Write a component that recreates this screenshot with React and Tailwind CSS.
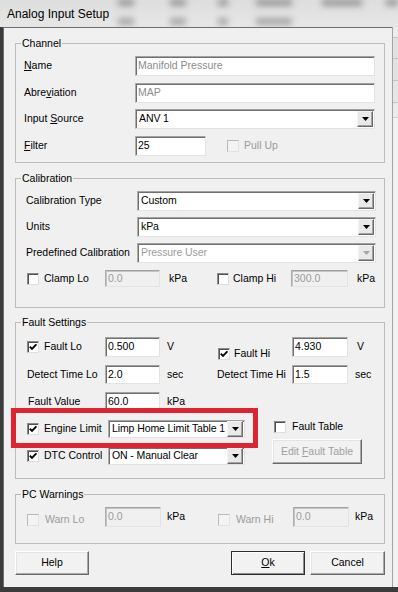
import React from "react";

const ui = "font-['Liberation_Sans',Arial,sans-serif]";

function Check({ checked = false, disabled = false, className = "" }) {
  return (
    <span
      className={`inline-flex h-[12px] w-[12px] shrink-0 items-center justify-center border ${
        disabled
          ? "border-t-[#b9b9b9] border-l-[#b9b9b9] border-r-[#e2e2e2] border-b-[#e2e2e2] bg-[#f3f3f3]"
          : "border-t-[#8a8a8a] border-l-[#8a8a8a] border-r-[#dedede] border-b-[#dedede] bg-white shadow-[inset_1px_1px_0_#505050]"
      } ${className}`}
    >
      {checked && (
        <svg width="8" height="8" viewBox="0 0 8 8">
          <path d="M0.8 3.6 3 5.9 7.4 1.3" stroke="#000" strokeWidth="1.9" fill="none" />
        </svg>
      )}
    </span>
  );
}

function Field({ value = "", disabled = false, dim = false, className = "" }) {
  return (
    <div
      className={`flex shrink-0 items-center overflow-hidden whitespace-nowrap border border-t-[#a2a2a2] border-l-[#adadad] border-r-[#e3e3e3] border-b-[#e3e3e3] pl-[2px] ${
        disabled
          ? "bg-[#f0f0f0] text-[#9b9b9b] shadow-[inset_1px_1px_0_#c4c4c4]"
          : "bg-white shadow-[inset_1px_1px_0_#707070]"
      } ${dim ? "text-[#8c8c8c]" : ""} ${className}`}
    >
      {value}
    </div>
  );
}

function Combo({ value = "", disabled = false, className = "" }) {
  return (
    <div
      className={`flex shrink-0 items-center border border-t-[#a2a2a2] border-l-[#adadad] border-r-[#e3e3e3] border-b-[#e3e3e3] bg-white shadow-[inset_1px_1px_0_#707070] ${className}`}
    >
      <span
        className={`min-w-0 flex-1 overflow-hidden whitespace-nowrap pl-[3px] tracking-[-0.1px] ${
          disabled ? "text-[#9b9b9b]" : ""
        }`}
      >
        {value}
      </span>
      <span className="mr-[1px] flex h-[16px] w-[16px] shrink-0 items-center justify-center border border-t-[#f4f4f4] border-l-[#f4f4f4] border-r-[#6a6a6a] border-b-[#6a6a6a] bg-[#e9e9e9] shadow-[inset_-1px_-1px_0_#a3a3a3]">
        <svg width="7" height="4" viewBox="0 0 7 4">
          <path d="M0 0H7L3.5 4Z" fill={disabled ? "#a5a5a5" : "#000"} />
        </svg>
      </span>
    </div>
  );
}

function Group({ title, className = "", children }) {
  return (
    <fieldset className={`w-[370px] shrink-0 border border-[#bcbcbc] ${className}`}>
      <legend className="ml-[5px] px-[1px] leading-[14px]">{title}</legend>
      {children}
    </fieldset>
  );
}

function Button({ children, primary = false, disabled = false, className = "" }) {
  return (
    <div
      className={`flex h-[24px] shrink-0 items-center justify-center border bg-[#f2f2f2] ${
        primary
          ? "border-[#2e2e2e] shadow-[inset_1px_1px_0_#fff,inset_-1px_-1px_0_#8c8c8c]"
          : "border-t-[#ffffff] border-l-[#ffffff] border-r-[#6b6b6b] border-b-[#6b6b6b] shadow-[inset_-1px_-1px_0_#a8a8a8,inset_1px_1px_0_#e4e4e4]"
      } ${disabled ? "text-[#a0a0a0]" : ""} ${className}`}
    >
      <span>{children}</span>
    </div>
  );
}

function TitleBar() {
  // blurred window content showing through the glass title bar
  const blobs = [
    ["ml-[118px]", "w-[16px]"],
    ["ml-[36px]", "w-[16px]"],
    ["ml-[32px]", "w-[10px]"],
    ["ml-[28px]", "w-[36px]"],
    ["ml-[30px]", "w-[40px]"],
    ["ml-[24px]", "w-[12px]"],
  ];
  return (
    <div className="relative h-[27px] shrink-0 overflow-hidden bg-gradient-to-b from-[#dddddd] to-[#e7e7e7]">
      <div className="absolute inset-0 blur-[3px]">
        <div className="-mt-[1px] flex h-[7px]">
          {blobs.map(([ml, w], i) => (
            <div key={i} className={`${ml} ${w} h-full bg-[#9a9a9a]`} />
          ))}
        </div>
        <div className="mt-[12px] flex h-[7px]">
          {blobs.slice(0, 4).map(([ml, w], i) => (
            <div key={i} className={`${ml} ${w} h-full bg-[#a6a6a6]`} />
          ))}
        </div>
      </div>
      <div className="relative flex h-full items-center pl-[7px] text-[12px] text-black">
        Analog Input Setup
      </div>
    </div>
  );
}

function RightStrip() {
  return (
    <div className="flex w-[6px] shrink-0 flex-col border-l border-[#a4a4a4] bg-[#ececec]">
      <div className="mt-[10px] h-[22px] border-y border-[#c4c4c4] bg-[#e2e2e2]" />
      <div className="h-[22px] border-b border-[#c4c4c4] bg-[#e2e2e2]" />
      <div className="h-[22px] border-b border-[#c4c4c4] bg-[#e6e6e6]" />
      <div className="mt-[14px] flex-1 border-t border-[#cfcfcf] bg-[#f2f2f2]" />
    </div>
  );
}

export default function App() {
  return (
    <div className={`${ui} flex h-[592px] w-[398px] flex-col overflow-hidden bg-[#3b3b3b] text-[10.5px] text-black`}>
      <TitleBar />
      <div className="flex min-h-0 flex-1">
        <div className="w-[3px] shrink-0 bg-[#3b3b3b]" />
        <div className="flex min-w-0 flex-1 flex-col border-l border-t border-[#6e6e6e] bg-[#f0f0f0] pl-[11px] pr-[7px] pt-[8px]">
          {/* Channel */}
          <Group title="Channel" className="h-[127px]">
            <div className="flex flex-col pl-[8px] pr-[9px]">
              <div className="mt-[6px] flex h-[20px] items-center">
                <span className="w-[111px] shrink-0"><u>N</u>ame</span>
                <Field value="Manifold Pressure" dim className="h-full flex-1" />
              </div>
              <div className="mt-[7px] flex h-[20px] items-center">
                <span className="w-[111px] shrink-0">Abre<u>v</u>iation</span>
                <Field value="MAP" dim className="h-full flex-1" />
              </div>
              <div className="mt-[6px] flex h-[20px] items-center">
                <span className="w-[111px] shrink-0">Input <u>S</u>ource</span>
                <Combo value="ANV 1" className="h-full flex-1" />
              </div>
              <div className="mt-[7px] flex h-[20px] items-center">
                <span className="w-[111px] shrink-0"><u>F</u>ilter</span>
                <Field value="25" className="h-full w-[71px]" />
                <Check disabled className="ml-[21px]" />
                <span className="ml-[5px] text-[#9b9b9b]">Pull Up</span>
              </div>
            </div>
          </Group>

          {/* Calibration */}
          <Group title="Calibration" className="mt-[8px] h-[137px]">
            <div className="flex flex-col pl-[10px] pr-[8px]">
              <div className="mt-[6px] flex h-[20px] items-center">
                <span className="w-[111px] shrink-0">Calibration Type</span>
                <Combo value="Custom" className="h-full flex-1" />
              </div>
              <div className="mt-[6px] flex h-[20px] items-center">
                <span className="w-[111px] shrink-0">Units</span>
                <Combo value="kPa" className="h-full flex-1" />
              </div>
              <div className="mt-[6px] flex h-[20px] items-center">
                <span className="w-[111px] shrink-0 whitespace-nowrap">Predefined Calibration</span>
                <Combo value="Pressure User" disabled className="h-full flex-1" />
              </div>
              <div className="-ml-[10px] mt-[7px] flex h-[17px] items-center pl-[11px]">
                <Check />
                <span className="ml-[5px] w-[61px] shrink-0">Clamp Lo</span>
                <Field value="0.0" disabled className="h-full w-[55px]" />
                <span className="ml-[9px] w-[48px] shrink-0">kPa</span>
                <Check />
                <span className="ml-[4px] w-[58px] shrink-0">Clamp Hi</span>
                <Field value="300.0" disabled className="h-full w-[57px]" />
                <span className="ml-[9px]">kPa</span>
              </div>
            </div>
          </Group>

          {/* Fault Settings */}
          <Group title="Fault Settings" className="mt-[7px] h-[164px]">
            <div className="flex flex-col">
              <div className="mt-[8px] flex h-[20px] items-center pl-[11px]">
                <Check checked />
                <span className="ml-[5px] w-[61px] shrink-0">Fault Lo</span>
                <Field value="0.500" className="h-full w-[55px]" />
                <span className="ml-[7px] w-[51px] shrink-0">V</span>
                <div className="mt-[10px] flex h-[14px] w-[74px] shrink-0 items-center self-start">
                  <Check checked />
                  <span className="ml-[4px]">Fault Hi</span>
                </div>
                <Field value="4.930" className="h-full w-[56px]" />
                <span className="ml-[9px]">V</span>
              </div>
              <div className="mt-[8px] flex h-[19px] items-center pl-[11px]">
                <span className="w-[78px] shrink-0">Detect Time Lo</span>
                <Field value="2.0" className="h-full w-[55px]" />
                <span className="ml-[7px] w-[50px] shrink-0">sec</span>
                <span className="w-[75px] shrink-0">Detect Time Hi</span>
                <Field value="1.5" className="h-full w-[56px]" />
                <span className="ml-[7px]">sec</span>
              </div>
              <div className="mt-[8px] flex h-[19px] items-center pl-[12px]">
                <span className="w-[77px] shrink-0">Fault Value</span>
                <Field value="60.0" className="h-full w-[55px]" />
                <span className="ml-[7px]">kPa</span>
              </div>
              <div className="mt-[9px] flex items-start">
                <div className="relative flex flex-col pl-[11px]">
                  <div className="flex h-[18px] items-center">
                    <Check checked />
                    <span className="ml-[5px] w-[64px] shrink-0">Engine Limit</span>
                    <Combo value="Limp Home Limit Table 1" className="h-full w-[137px]" />
                  </div>
                  <div className="mt-[9px] flex h-[18px] items-center">
                    <Check checked />
                    <span className="ml-[5px] w-[64px] shrink-0">DTC Control</span>
                    <Combo value="ON - Manual Clear" className="h-full w-[137px]" />
                  </div>
                  <div className="pointer-events-none absolute -left-[5px] -top-[12px] h-[40px] w-[247px] border-[5px] border-[#dc2530]" />
                </div>
                <div className="ml-[27px] flex flex-col">
                  <div className="flex h-[14px] items-center">
                    <Check className="ml-[2px]" />
                    <span className="ml-[6px]">Fault Table</span>
                  </div>
                  <Button disabled className="mt-[5px] h-[25px] w-[90px]">
                    Edit <u>F</u>ault Table
                  </Button>
                </div>
              </div>
            </div>
          </Group>

          {/* PC Warnings */}
          <Group title="PC Warnings" className="mt-[8px] h-[57px]">
            <div className="mt-[6px] flex h-[20px] items-center pl-[11px]">
              <div className="mt-[6px] flex items-center">
                <Check disabled />
                <span className="ml-[6px] w-[60px] shrink-0 text-[#9b9b9b]">Warn Lo</span>
              </div>
              <Field value="0.0" disabled className="h-full w-[56px]" />
              <span className="ml-[6px] w-[51px] shrink-0">kPa</span>
              <div className="mt-[6px] flex items-center">
                <Check disabled />
                <span className="ml-[6px] w-[57px] shrink-0 text-[#9b9b9b]">Warn Hi</span>
              </div>
              <Field value="0.0" disabled className="h-full w-[56px]" />
              <span className="ml-[6px]">kPa</span>
            </div>
          </Group>

          {/* Buttons */}
          <div className="mt-[7px] flex items-center">
            <Button className="w-[74px]">Help</Button>
            <Button primary className="ml-auto w-[74px]">
              <u>O</u>k
            </Button>
            <Button className="ml-[5px] w-[75px]">Cancel</Button>
          </div>
        </div>
        <RightStrip />
      </div>
      <div className="h-[5px] shrink-0 bg-[#3b3b3b]" />
    </div>
  );
}
